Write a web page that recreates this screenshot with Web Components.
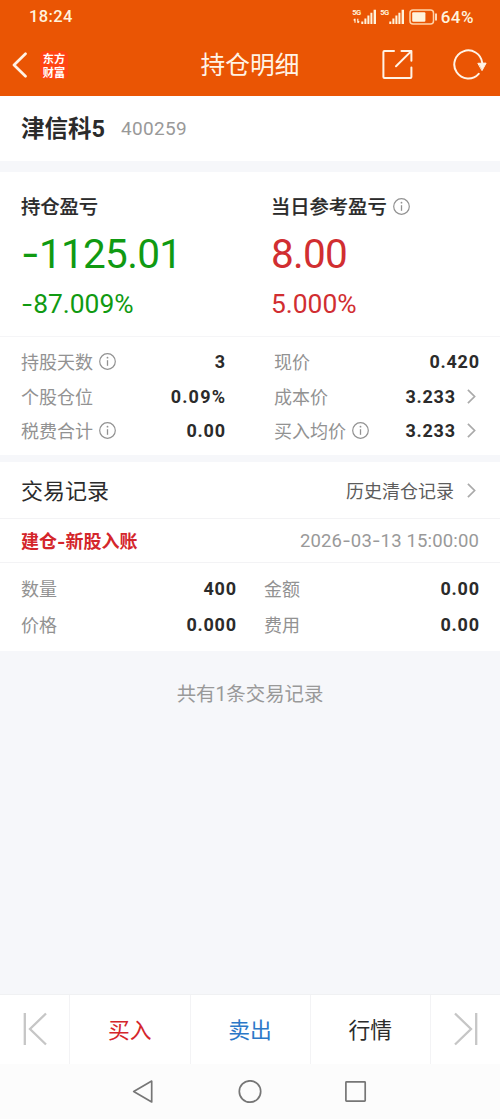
<!DOCTYPE html>
<html lang="zh-CN">
<head>
<meta charset="utf-8">
<meta name="viewport" content="width=device-width, initial-scale=1">
<title>持仓明细</title>
<style>
html,body{margin:0;padding:0;background:#f6f7fa}
body{font-family:Roboto,"Noto Sans CJK SC",sans-serif;color:#2b2b2b}
</style>
</head>
<body>
<position-page></position-page>
<script>
const define = (name, html) => {
  const t = document.createElement('template');
  t.innerHTML = html;
  customElements.define(name, class extends HTMLElement {
    constructor() {
      super();
      this.attachShadow({ mode: 'open' }).appendChild(t.content.cloneNode(true));
    }
  });
};

define('info-icon', `
<style>:host{display:block;width:17px;height:17px;flex:none}svg{display:block}</style>
<svg width="17" height="17" viewBox="0 0 17 17" fill="none" stroke="#929292"><circle cx="8.5" cy="8.5" r="7.8" stroke-width="1.2"/><path d="M8.5 7.2v5.6" stroke-width="1.3"/><circle cx="8.5" cy="4.7" r=".9" fill="#929292" stroke="none"/></svg>`);

define('chevron-icon', `
<style>:host{display:block;width:9px;height:15px;flex:none}svg{display:block}</style>
<svg width="9" height="15" viewBox="0 0 9 15" fill="none" stroke="#aaa" stroke-width="1.7"><path d="M.9.9 7.6 7.5.9 14.1"/></svg>`);

define('signal-icon', `
<style>
:host{display:block;position:relative;width:24px;height:16px;flex:none}
b{position:absolute;left:-.5px;top:-.5px;font:700 7.6px/8px Roboto,sans-serif;letter-spacing:-.5px;color:#fff3dc}
svg{display:block}
:host([data]) .d{display:block}.d{display:none}
</style>
<b>5G</b>
<svg width="24" height="16" viewBox="0 0 24 16" fill="#fff3dc"><path class="d" d="M2 9.8v4M.7 11.3 2 9.8M4.8 9.8v4M6.2 12.3l-1.4 1.5" stroke="#fff3dc" stroke-width="1.2" fill="none"/><path d="M8.3 12.6h2V15h-2zM11.4 9.6h2V15h-2zM14.4 6.6h2V15h-2zM17.4 3.8h2V15h-2zM20.6.8h2.4V15h-2.4z"/></svg>`);

define('status-bar', `
<style>
:host{display:flex;height:34px;align-items:center;padding:0 26px 0 29px;color:#fff3dc;font-weight:500;font-size:16.5px;line-height:34px}
.time{letter-spacing:.35px;flex:1}
.sig{margin-right:4px}
.bat{display:block;margin:0 3px 0 0}
.pct{letter-spacing:.5px;font-size:17px}
</style>
<span class="time">18:24</span>
<signal-icon class="sig" data></signal-icon><signal-icon class="sig"></signal-icon>
<svg class="bat" width="29" height="16" viewBox="0 0 29 16" fill="none"><rect x="1" y="1" width="23.5" height="14" rx="3" stroke="#ffd3a8" stroke-width="1.5"/><rect x="3.2" y="3.2" width="13.2" height="9.6" rx="1" fill="#fff3dc"/><path d="M27 4.6v6.8" stroke="#fff3dc" stroke-width="1.7"/></svg>
<span class="pct">64%</span>`);

define('title-bar', `
<style>
:host{display:grid;grid-template-columns:1fr auto 1fr;height:62px;align-items:center;color:#fff3e6}
.l{display:flex;align-items:center;padding-left:12px;gap:13px}
.logo{display:grid;grid-template-rows:14px 14px;width:28px;height:28px;border-radius:5px;background:#ff4413;color:#fff;font:700 11.2px/14px "Noto Sans CJK SC",sans-serif;text-align:center}
.logo span{display:block;height:14px;overflow:hidden}
.t{font-size:24.7px;line-height:36px;padding-top:2px}
.r{display:flex;justify-content:flex-end;align-items:center;padding-right:13px;gap:40px;margin-top:-2px}
svg{display:block}
</style>
<div class="l"><svg width="15" height="26" viewBox="0 0 15 26" fill="none" stroke="#fff3e6" stroke-width="2.7" stroke-linecap="round" stroke-linejoin="round"><path d="M13.5 1.8 2 13l11.5 11.2"/></svg>
<div class="logo"><span>东方</span><span>财富</span></div></div>
<div class="t">持仓明细</div>
<div class="r">
<svg width="31" height="31" viewBox="0 0 31 31" fill="none" stroke="#fff3e6" stroke-width="2" stroke-linecap="round" stroke-linejoin="round"><path d="M12 2H2.4Q1.4 2 1.4 3v25q0 1 1 1h26q1 0 1-1V18.5"/><path d="M19.5 2h9.9v9.8M29 2.4 14 17.3"/></svg>
<svg width="34" height="31" viewBox="0 0 34 31" fill="none" stroke="#fff3e6" stroke-width="2" stroke-linecap="round"><path d="M25.7 24.8A14 14 0 1 1 29.2 13.8"/><path d="m25.2 14.3 7.9-.2-3.9 7.2z" fill="#fff3e6" stroke-width="1" stroke-linejoin="round"/></svg>
</div>`);

define('stock-name', `
<style>
:host{display:flex;height:65px;box-sizing:border-box;align-items:center;padding-left:21px;gap:16px;background:#fff;line-height:34px}
b{font-size:23.5px;font-weight:700;color:#2b2b2b;padding-top:1px}
span{font-size:19px;color:#999;letter-spacing:.3px;padding-top:1px}
</style>
<b>津信科5</b><span>400259</span>`);

define('profit-cell', `
<style>
:host{display:grid;grid-template-rows:26px 58px 42px;align-items:center;padding-top:21px}
.h{display:flex;align-items:center;gap:6px;font-size:19.3px;line-height:26px;font-weight:500;color:#2b2b2b;-webkit-text-stroke:.2px #2b2b2b}
.h ::slotted(span){padding-top:4px}
.big{font-size:40.5px;line-height:48px;padding-top:12px;letter-spacing:-.7px}
.small{font-size:26.4px;line-height:32px;padding-top:11px}
</style>
<div class="h"><slot name="label"></slot></div>
<div class="big"><slot name="value"></slot></div>
<div class="small"><slot name="rate"></slot></div>`);

define('profit-panel', `
<style>
:host{display:grid;grid-template-columns:250px 1fr;height:165px;box-sizing:border-box;padding-left:21px;background:#fff;border-bottom:1px solid #f5f5f7}
.g{color:#109a12}.r{color:#d12e31}
i{font-style:normal;font-family:Inter,sans-serif;font-weight:400}
</style>
<profit-cell class="g"><span slot="label">持仓盈亏</span><span slot="value"><i>-</i>1125.01</span><span slot="rate"><i>-</i>87.009%</span></profit-cell>
<profit-cell class="r"><span slot="label">当日参考盈亏</span><info-icon slot="label"></info-icon><span slot="value">8.00</span><span slot="rate">5.000%</span></profit-cell>`);

define('data-row', `
<style>
:host{display:flex;align-items:center;font-size:18px;line-height:28px;color:#929292}
.k{display:flex;align-items:center;gap:5.5px;flex:1}
.k span{padding-top:3px}
.v{display:flex;align-items:center;gap:12px;font-weight:700;color:#2b2b2b;letter-spacing:.75px;font-size:18px}
.v ::slotted(span){padding-top:1px;margin-right:-.75px}
</style>
<div class="k"><span><slot></slot></span><slot name="info"></slot></div><div class="v"><slot name="v"></slot></div>`);

define('detail-grid', `
<style>
:host{display:grid;grid-template-columns:204px 205px;column-gap:49px;grid-auto-rows:34.7px;height:118px;box-sizing:border-box;padding:7px 21px 0;background:#fff}
chevron-icon{margin-right:3px}
.wide{letter-spacing:1.2px;margin-right:-1.2px}
</style>
<data-row>持股天数<info-icon slot="info"></info-icon><span slot="v">3</span></data-row>
<data-row>现价<span slot="v">0.420</span></data-row>
<data-row>个股仓位<span slot="v" class="wide">0.09%</span></data-row>
<data-row>成本价<span slot="v">3.233</span><chevron-icon slot="v"></chevron-icon></data-row>
<data-row>税费合计<info-icon slot="info"></info-icon><span slot="v">0.00</span></data-row>
<data-row>买入均价<info-icon slot="info"></info-icon><span slot="v">3.233</span><chevron-icon slot="v"></chevron-icon></data-row>`);

define('record-list', `
<style>
:host{display:block;background:#fff}
div{display:flex;align-items:center;justify-content:space-between;box-sizing:border-box;padding:0 21px;border-bottom:1px solid #f3f3f5}
.head{height:57px;font-size:22px;line-height:32px}
.head>span:first-child,.more span{padding-top:4px}
.more{display:flex;align-items:center;gap:13px;font-size:18px;color:#5c5c5c;padding-right:3px}
.entry{height:44px;font-size:18px;line-height:28px}
.entry b{color:#d4262b;font-weight:700;font-size:18px;padding-top:3px}
.entry i{font-style:normal;font-family:Inter,sans-serif}
.entry span{color:#999;font-size:18.5px;letter-spacing:.15px}
section{display:grid;grid-template-columns:215px 215px;column-gap:28px;grid-auto-rows:36px;height:88px;box-sizing:border-box;padding:7px 21px 0}
</style>
<div class="head"><span>交易记录</span><span class="more"><span>历史清仓记录</span><chevron-icon></chevron-icon></span></div>
<div class="entry"><b>建仓<i>-</i>新股入账</b><span>2026<i>-</i>03<i>-</i>13 15:00:00</span></div>
<section>
<data-row>数量<span slot="v">400</span></data-row><data-row>金额<span slot="v">0.00</span></data-row>
<data-row>价格<span slot="v">0.000</span></data-row><data-row>费用<span slot="v">0.00</span></data-row>
</section>`);

define('trade-bar', `
<style>
:host{display:grid;grid-template-columns:69px 119.5px 119px 119.5px 1fr;column-gap:1px;height:70px;box-sizing:border-box;border-top:1px solid #f0f1f3;background:#f3f3f5}
div{display:flex;align-items:center;justify-content:center;background:#fff;font-size:21.8px;line-height:32px}
.c{padding-top:2px}
.buy{color:#d4262b}.sell{color:#2b78c8}
svg{display:block;margin-top:-2px}
</style>
<div><svg width="24" height="34" viewBox="0 0 24 34" fill="none" stroke="#c6c6c6" stroke-width="2.3"><path d="M1.8 1v32M23 1.5 7 17l16 15.5"/></svg></div>
<div class="c buy">买入</div><div class="c sell">卖出</div><div class="c">行情</div>
<div><svg width="24" height="34" viewBox="0 0 24 34" fill="none" stroke="#c6c6c6" stroke-width="2.3"><path d="M22.2 1v32M1 1.5 17 17 1 32.5"/></svg></div>`);

define('system-nav', `
<style>
:host{display:flex;height:55px;align-items:center;justify-content:center;gap:82px;background:#fcfcfc}
svg{display:block}
</style>
<svg width="24" height="24" viewBox="0 0 24 24" fill="none" stroke="#767676" stroke-width="1.7" stroke-linejoin="round"><path d="M1.7 11.5 19.7 1.1v20.8z"/></svg>
<svg width="24" height="24" viewBox="0 0 24 24" fill="none" stroke="#767676" stroke-width="1.7"><circle cx="12" cy="11.5" r="10.7"/></svg>
<svg width="24" height="24" viewBox="0 0 24 24" fill="none" stroke="#767676" stroke-width="1.7"><rect x="1.9" y="1.9" width="19.3" height="19.3" rx=".6"/></svg>`);

define('position-page', `
<style>
:host{display:flex;flex-direction:column;width:500px;height:1119px;overflow:hidden;background:#f6f7fa}
header{background:#ea5504;height:96px}
stock-name{margin-bottom:11px}
detail-grid{margin-bottom:7px}
main{flex:1}
p{margin:0;padding-top:30px;text-align:center;font-size:19.4px;line-height:28px;color:#999}
</style>
<header><status-bar></status-bar><title-bar></title-bar></header>
<main><stock-name></stock-name><profit-panel></profit-panel><detail-grid></detail-grid><record-list></record-list><p>共有1条交易记录</p></main>
<trade-bar></trade-bar><system-nav></system-nav>`);
</script>
</body>
</html>
